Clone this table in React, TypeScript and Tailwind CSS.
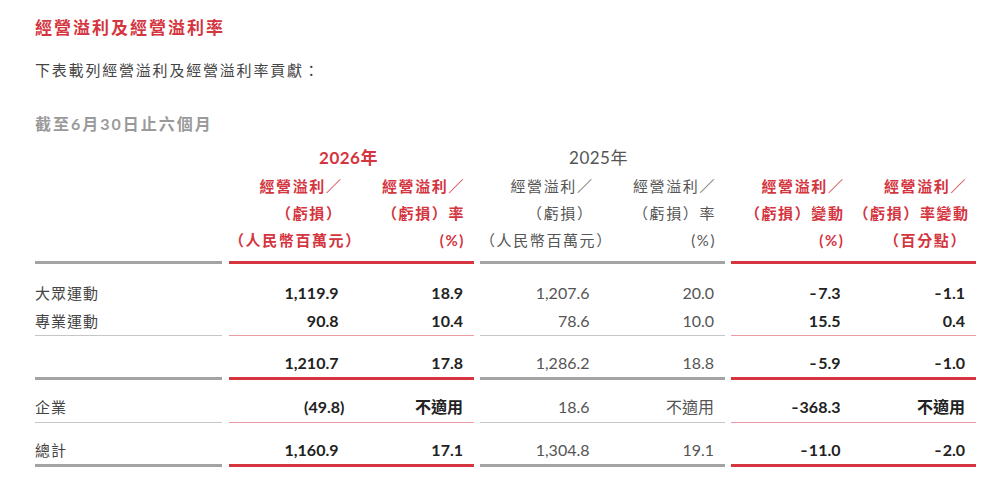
import React from "react";

const font = "font-['Lato','Noto_Sans_CJK_TC',sans-serif]";

// three column groups: 2026 (red rules), 2025 (grey rules), change (red rules)
const groups = [
  { thick: "border-[#d4353f]", thin: "border-[#eb9ca2]", ml: "ml-[7px]" },
  { thick: "border-[#a3a3a3]", thin: "border-[#c6c6c6]", ml: "ml-[6px]" },
  { thick: "border-[#d4353f]", thin: "border-[#eb9ca2]", ml: "ml-[6px]" },
];

const numClass = (i: number) =>
  i === 2 || i === 3 ? "text-[#555] font-normal" : "text-[#222] font-bold";

const Cell: React.FC<{ text: string; idx: number }> = ({ text, idx }) => {
  const isParen = text.startsWith("(");
  const negative = text.startsWith("-");
  return (
    <div
      className={`w-1/2 text-right text-[16px] ${numClass(idx)} ${
        isParen ? "pr-[7px]" : idx % 2 === 0 ? "pr-[13px]" : "pr-[11px]"
      }`}
    >
      {negative ? (
        <>
          <span className="inline-block scale-x-125 mr-[2px]">-</span>
          {text.slice(1)}
        </>
      ) : (
        text
      )}
    </div>
  );
};

const TableRow: React.FC<{
  labels: string[];
  cells: string[][];
  border: "thin" | "thick";
  pt: string;
}> = ({ labels, cells, border, pt }) => (
  <div className="flex">
    <div
      className={`w-[187px] shrink-0 ${pt} ${
        border === "thick" ? "border-b-[3px] border-[#a3a3a3]" : "border-b border-[#c6c6c6]"
      }`}
    >
      {cells.map((_, i) => (
        <div key={i} className="h-[28px] leading-[28px] text-[15px] tracking-[1px] text-[#444]">
          {labels[i] ?? ""}
        </div>
      ))}
    </div>
    {groups.map((g, gi) => (
      <div
        key={gi}
        className={`w-[245px] shrink-0 ${g.ml} ${pt} ${
          border === "thick" ? `border-b-[3px] ${g.thick}` : `border-b ${g.thin}`
        }`}
      >
        {cells.map((line, li) => (
          <div key={li} className="flex h-[28px] leading-[28px]">
            <Cell text={line[gi * 2]} idx={gi * 2} />
            <Cell text={line[gi * 2 + 1]} idx={gi * 2 + 1} />
          </div>
        ))}
      </div>
    ))}
  </div>
);

const headers = [
  ["經營溢利／", "（虧損）", "（人民幣百萬元）"],
  ["經營溢利／", "（虧損）率", "(%)"],
  ["經營溢利／", "（虧損）", "（人民幣百萬元）"],
  ["經營溢利／", "（虧損）率", "(%)"],
  ["經營溢利／", "（虧損）變動", "(%)"],
  ["經營溢利／", "（虧損）率變動", "（百分點）"],
];

const HeaderCell: React.FC<{ lines: string[]; idx: number }> = ({ lines, idx }) => {
  const red = idx < 2 || idx > 3;
  return (
    <div
      className={`w-1/2 text-right text-[15px] tracking-[1.6px] pr-[9px] ${
        red ? "text-[#d4353f] font-bold" : "text-[#555] font-normal"
      }`}
    >
      {lines.map((l, i) => (
        <div key={i} className="h-[27px] leading-[27px] whitespace-nowrap">
          {l}
        </div>
      ))}
    </div>
  );
};

const App: React.FC = () => {
  return (
    <div className={`w-[1000px] h-[484px] bg-white pl-[35px] pt-[16px] ${font}`}>
      <h1 className="text-[17px] leading-[24px] font-bold tracking-[2px] text-[#d4353f]">
        經營溢利及經營溢利率
      </h1>
      <p className="mt-[18px] text-[15px] leading-[24px] tracking-[1.8px] text-[#444]">
        下表載列經營溢利及經營溢利率貢獻：
      </p>
      <p className="mt-[30px] text-[16px] leading-[24px] font-bold tracking-[2px] text-[#9a9a9a]">
        截至6月30日止六個月
      </p>

      <div className="mt-[10px]">
        {/* year row */}
        <div className="flex h-[24px] leading-[24px]">
          <div className="w-[187px] shrink-0" />
          <div className="w-[245px] ml-[7px] shrink-0 text-center text-[17px] font-bold tracking-[0.5px] text-[#d4353f] pr-[6px]">
            2026年
          </div>
          <div className="w-[245px] ml-[6px] shrink-0 text-center text-[17px] tracking-[0.5px] text-[#555] pr-[8px]">
            2025年
          </div>
        </div>

        {/* column headers */}
        <div className="flex">
          <div className="w-[187px] shrink-0 pt-[3px] pb-[7px] border-b-[3px] border-[#a3a3a3]" />
          {groups.map((g, gi) => (
            <div
              key={gi}
              className={`w-[245px] shrink-0 ${g.ml} flex pt-[3px] pb-[7px] border-b-[3px] ${g.thick}`}
            >
              <HeaderCell lines={headers[gi * 2]} idx={gi * 2} />
              <HeaderCell lines={headers[gi * 2 + 1]} idx={gi * 2 + 1} />
            </div>
          ))}
        </div>

        <TableRow
          labels={["大眾運動", "專業運動"]}
          cells={[
            ["1,119.9", "18.9", "1,207.6", "20.0", "-7.3", "-1.1"],
            ["90.8", "10.4", "78.6", "10.0", "15.5", "0.4"],
          ]}
          border="thin"
          pt="pt-[15px]"
        />
        <TableRow
          labels={[""]}
          cells={[["1,210.7", "17.8", "1,286.2", "18.8", "-5.9", "-1.0"]]}
          border="thick"
          pt="pt-[13px]"
        />
        <TableRow
          labels={["企業"]}
          cells={[["(49.8)", "不適用", "18.6", "不適用", "-368.3", "不適用"]]}
          border="thin"
          pt="pt-[13px] pb-[1px]"
        />
        <TableRow
          labels={["總計"]}
          cells={[["1,160.9", "17.1", "1,304.8", "19.1", "-11.0", "-2.0"]]}
          border="thick"
          pt="pt-[13px]"
        />
      </div>
    </div>
  );
};

export default App;
